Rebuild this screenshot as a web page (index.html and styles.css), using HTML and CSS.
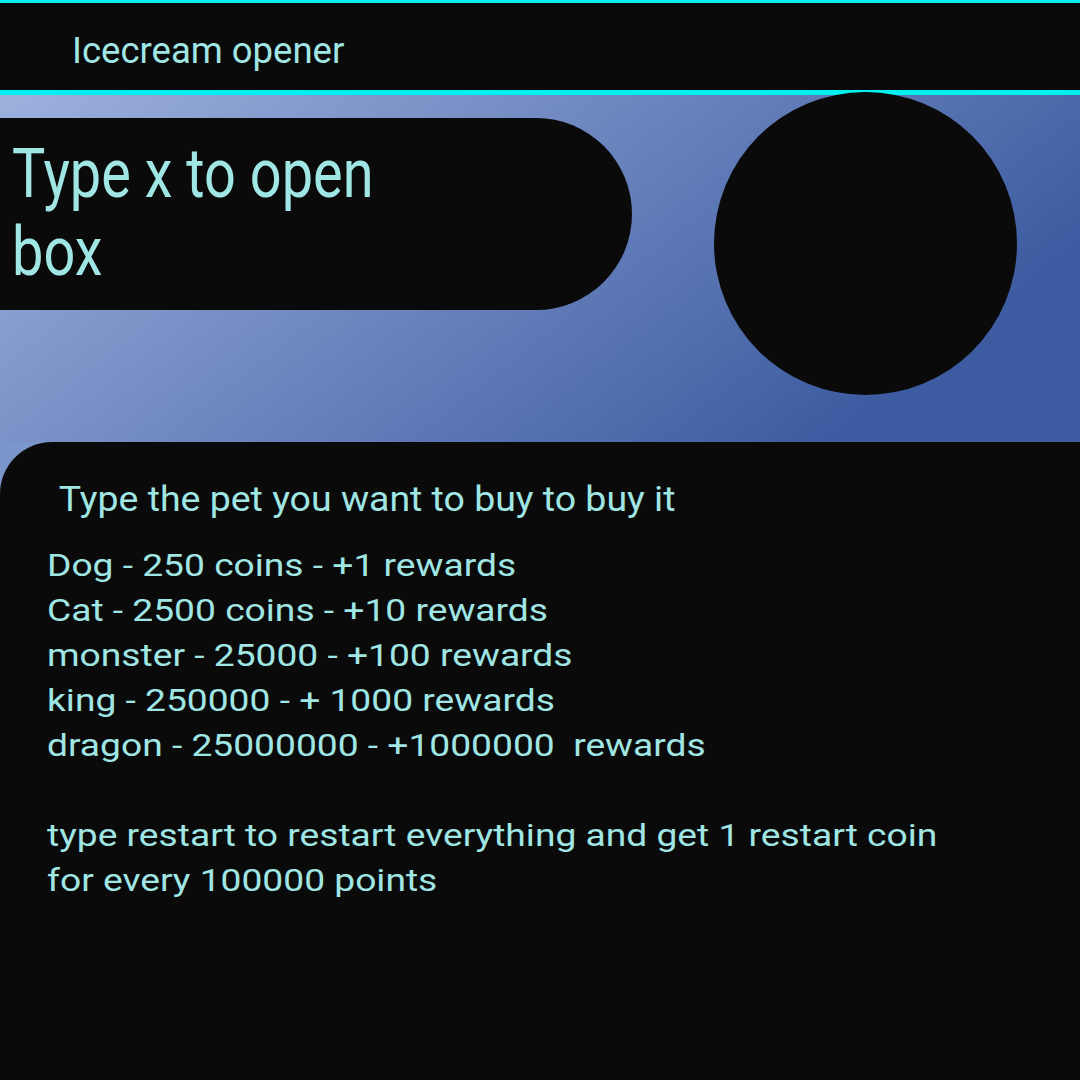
FILE: index.html
```html
<!DOCTYPE html>
<html lang="en">
<head>
  <meta charset="UTF-8">
  <meta name="viewport" content="width=device-width, initial-scale=1.0">
  <title>Icecream opener</title>
  <link rel="stylesheet" href="styles.css">
</head>
<body>

<div class="app">
  <div class="topbar">Icecream opener</div>

  <div class="main">
    <div class="hero">
      <div class="pill">
        <div class="pill-text">Type x to open<br>box</div>
      </div>
      <div class="circle"></div>
    </div>

    <div class="panel">
      <div class="panel-title">Type the pet you want to buy to buy it</div>
      <div class="shop">Dog - 250 coins - +1 rewards
Cat - 2500 coins - +10 rewards
monster - 25000 - +100 rewards
king - 250000 - + 1000 rewards
dragon - 25000000 - +1000000  rewards

type restart to restart everything and get 1 restart coin
for every 100000 points</div>
    </div>
  </div>
</div>

</body>
</html>
```

FILE: styles.css
```css
body {
  margin: 0;
  background-color: #0a0a0a;
  font-family: Roboto, "Noto Sans", sans-serif;
  color: #a0e6e4;
}
.app {
  width: 1080px;
  height: 1080px;
  overflow: hidden;
  display: flex;
  flex-direction: column;
}
.topbar {
  height: 80px;
  padding: 7px 0 0 72px;
  border-top: 3px solid #00f0f0;
  border-bottom: 5px solid #00f0f0;
  font-size: 36.5px;
  display: flex;
  align-items: center;
}
.main {
  flex: 1;
  display: flex;
  flex-direction: column;
  /* gradient only behind the hero, plain colour behind the panel corner */
  background: linear-gradient(142deg, #9db1dd 0%, #3c5ba0 84%) 0 0 / 100% 347px no-repeat, #7b96cb;
}
.hero {
  height: 347px;
  display: flex;
  align-items: flex-start;
  padding-top: 23px;
  box-sizing: border-box;
}
.pill {
  width: 632px;
  height: 192px;
  flex-shrink: 0;
  background-color: #0a0a0a;
  border-radius: 0 96px 96px 0;
  box-sizing: border-box;
  padding: 17px 0 0 12px;
}
.pill-text {
  font-size: 69px;
  line-height: 78px;
  transform: scaleX(0.81);
  transform-origin: left top;
  white-space: nowrap;
}
.circle {
  width: 303px;
  height: 303px;
  flex-shrink: 0;
  margin-top: -26px;
  margin-left: 82px;
  border-radius: 50%;
  background-color: #0a0a0a;
}
.panel {
  flex: 1;
  background-color: #0a0a0a;
  border-top-left-radius: 52px;
  padding: 36px 0 0 47px;
}
.panel-title {
  font-size: 35px;
  padding-left: 11px;
  line-height: 44px;
  margin-bottom: 21px;
  transform: scaleX(1.07);
  transform-origin: left top;
  white-space: nowrap;
}
.shop {
  white-space: pre;
  font-size: 32px;
  line-height: 45px;
  transform: scaleX(1.162);
  transform-origin: left top;
}
```
